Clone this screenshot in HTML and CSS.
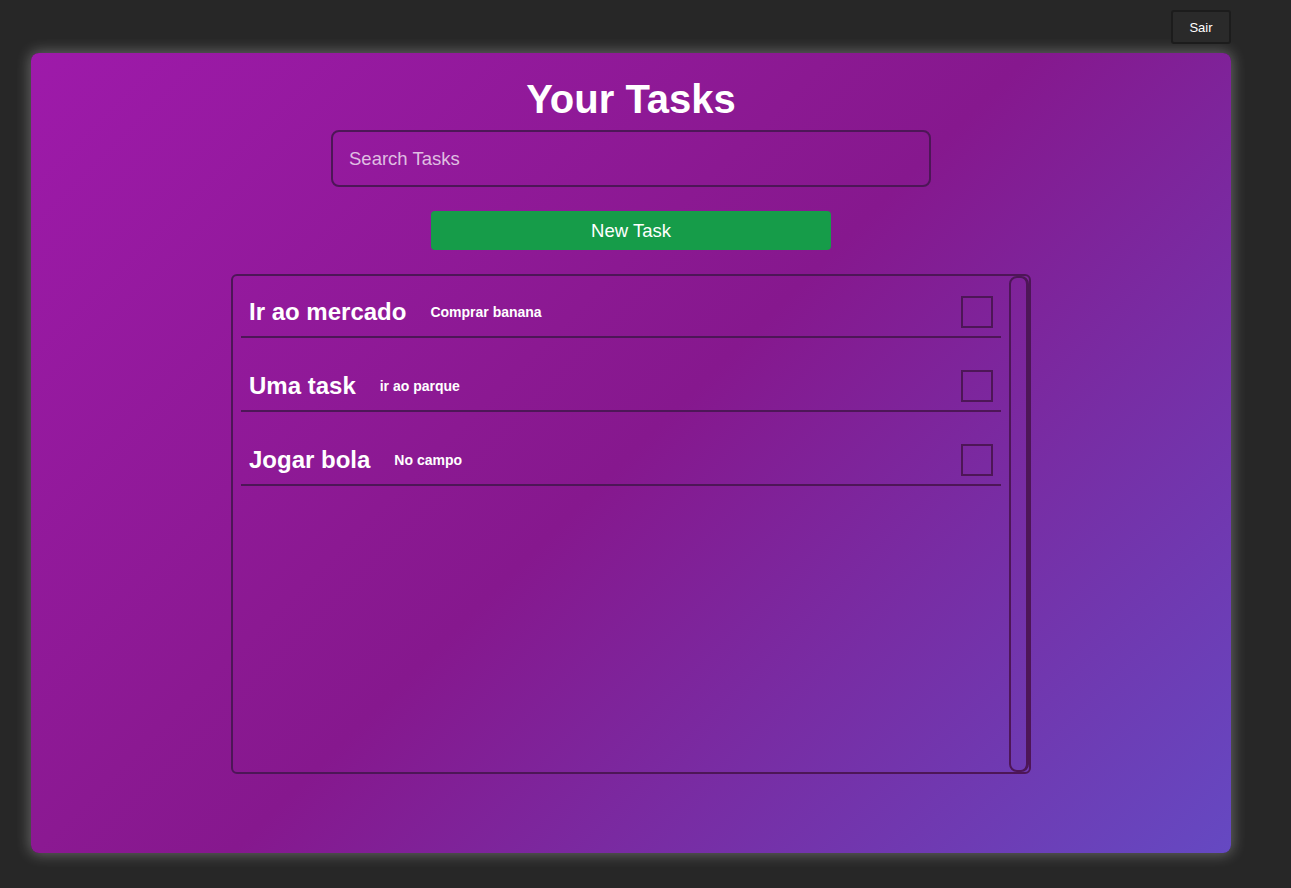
FILE: index.html
```html
<!DOCTYPE html>
<html lang="pt">
<head>
<meta charset="utf-8">
<title>Your Tasks</title>
<link rel="stylesheet" href="styles.css">
</head>
<body>
<div class="page">
  <header class="topbar">
    <button class="logout">Sair</button>
  </header>
  <main class="card">
    <h1 class="title">Your Tasks</h1>
    <input class="search" type="text" placeholder="Search Tasks">
    <button class="new-task">New Task</button>
    <div class="list">
      <div class="items">
        <div class="task">
          <div class="task-text">
            <span class="task-title">Ir ao mercado</span>
            <span class="task-desc">Comprar banana</span>
          </div>
          <span class="check"></span>
        </div>
        <div class="task">
          <div class="task-text">
            <span class="task-title">Uma task</span>
            <span class="task-desc">ir ao parque</span>
          </div>
          <span class="check"></span>
        </div>
        <div class="task">
          <div class="task-text">
            <span class="task-title">Jogar bola</span>
            <span class="task-desc">No campo</span>
          </div>
          <span class="check"></span>
        </div>
      </div>
      <div class="track"></div>
    </div>
  </main>
</div>
</body>
</html>
```

FILE: styles.css
```css
* { box-sizing: border-box; }

html, body {
  margin: 0;
  height: 100%;
  background: #272727;
  font-family: "Liberation Sans", Arial, sans-serif;
  color: #fff;
}

.page {
  width: 1231px;
  padding-left: 31px;
  padding-top: 10px;
}

.topbar {
  display: flex;
  justify-content: flex-end;
  height: 34px;
  margin-bottom: 9px;
}

.logout {
  width: 60px;
  height: 34px;
  background: #2a2a2a;
  border: 2px solid #1c1c1c;
  border-radius: 3px;
  color: #fff;
  font-family: "Liberation Sans", Arial, sans-serif;
  font-size: 13px;
  padding: 0;
}

.card {
  width: 1200px;
  height: 800px;
  border-radius: 8px;
  background: linear-gradient(135deg, #9e1aaa 0%, #8b1992 40%, #86188e 50%, #6549c2 100%);
  box-shadow: 0 0 14px 2px rgba(255, 255, 255, 0.28);
  display: flex;
  flex-direction: column;
  align-items: center;
}

.title {
  margin: 23px 0 8px;
  font-size: 40px;
  font-weight: bold;
  line-height: 46px;
}

.search {
  width: 600px;
  height: 57px;
  border: 2px solid #4d1657;
  border-radius: 8px;
  background: transparent;
  padding: 0 16px;
  font-family: "Liberation Sans", Arial, sans-serif;
  font-size: 18.5px;
  color: #fff;
  outline: none;
}

.search::placeholder {
  color: rgba(255, 255, 255, 0.72);
}

.new-task {
  margin-top: 24px;
  width: 400px;
  height: 39px;
  border: none;
  border-radius: 4px;
  background: #169c49;
  color: #fff;
  font-family: "Liberation Sans", Arial, sans-serif;
  font-size: 18.5px;
  padding: 0;
}

.list {
  margin-top: 24px;
  width: 800px;
  height: 500px;
  border: 2px solid #4d1657;
  border-radius: 6px;
  display: flex;
}

.items {
  flex: 1;
  display: flex;
  flex-direction: column;
  gap: 24px;
  padding: 12px 8px 0 8px;
}

.track {
  width: 20px;
  border: 2px solid #4d1657;
  border-right-width: 3px;
  border-radius: 8px;
  flex-shrink: 0;
}

.task {
  display: flex;
  align-items: center;
  justify-content: space-between;
  padding: 8px;
  border-bottom: 2px solid #4d1657;
}

.task-text {
  display: flex;
  align-items: center;
  gap: 24px;
}

.task-title {
  font-size: 24px;
  font-weight: bold;
}

.task-desc {
  font-size: 14px;
  font-weight: bold;
}

.check {
  width: 32px;
  height: 32px;
  border: 2px solid #4d1657;
}
```
